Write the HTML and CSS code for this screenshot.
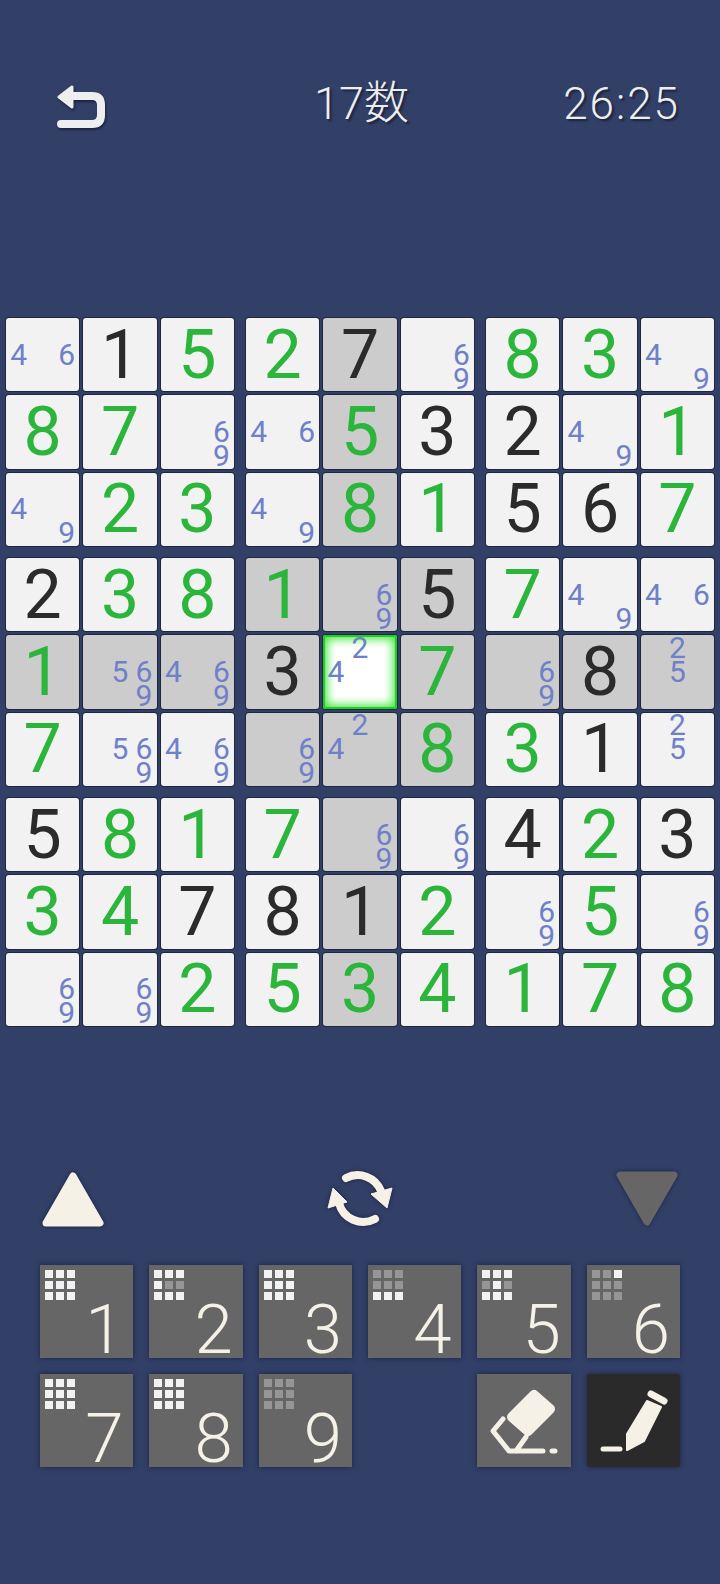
FILE: index.html
```html
<!DOCTYPE html>
<html lang="ja">
<head>
    <meta charset="UTF-8">
    <title>Sudoku</title>
    <link rel="stylesheet" href="styles.css">
</head>
<body>
    <div class="screen">
        <div class="header">
            <svg class="back-icon" viewBox="0 0 48 44">
                <path class="back-shaft" d="M14 11H35Q44 11 44 20V30Q44 39 35 39H4"/>
                <path class="back-head" d="M2 12L15 2V22Z"/>
            </svg>
            <div class="title">17数</div>
            <div class="timer">26:25</div>
        </div>

        <div class="board">
            <!-- row 1-3 -->
            <div class="block">
                <div class="cell"><span class="n4">4</span><span class="n6">6</span></div>
                <div class="cell given">1</div>
                <div class="cell solved">5</div>
                <div class="cell solved">8</div>
                <div class="cell solved">7</div>
                <div class="cell"><span class="n6">6</span><span class="n9">9</span></div>
                <div class="cell"><span class="n4">4</span><span class="n9">9</span></div>
                <div class="cell solved">2</div>
                <div class="cell solved">3</div>
            </div>
            <div class="block">
                <div class="cell solved">2</div>
                <div class="cell given shade">7</div>
                <div class="cell"><span class="n6">6</span><span class="n9">9</span></div>
                <div class="cell"><span class="n4">4</span><span class="n6">6</span></div>
                <div class="cell solved shade">5</div>
                <div class="cell given">3</div>
                <div class="cell"><span class="n4">4</span><span class="n9">9</span></div>
                <div class="cell solved shade">8</div>
                <div class="cell solved">1</div>
            </div>
            <div class="block">
                <div class="cell solved">8</div>
                <div class="cell solved">3</div>
                <div class="cell"><span class="n4">4</span><span class="n9">9</span></div>
                <div class="cell given">2</div>
                <div class="cell"><span class="n4">4</span><span class="n9">9</span></div>
                <div class="cell solved">1</div>
                <div class="cell given">5</div>
                <div class="cell given">6</div>
                <div class="cell solved">7</div>
            </div>

            <!-- row 4-6 -->
            <div class="block">
                <div class="cell given">2</div>
                <div class="cell solved">3</div>
                <div class="cell solved">8</div>
                <div class="cell solved shade">1</div>
                <div class="cell shade"><span class="n5">5</span><span class="n6">6</span><span class="n9">9</span></div>
                <div class="cell shade"><span class="n4">4</span><span class="n6">6</span><span class="n9">9</span></div>
                <div class="cell solved">7</div>
                <div class="cell"><span class="n5">5</span><span class="n6">6</span><span class="n9">9</span></div>
                <div class="cell"><span class="n4">4</span><span class="n6">6</span><span class="n9">9</span></div>
            </div>
            <div class="block">
                <div class="cell solved shade">1</div>
                <div class="cell shade"><span class="n6">6</span><span class="n9">9</span></div>
                <div class="cell given shade">5</div>
                <div class="cell given shade">3</div>
                <div class="cell selected"><span class="n2">2</span><span class="n4">4</span></div>
                <div class="cell solved shade">7</div>
                <div class="cell shade"><span class="n6">6</span><span class="n9">9</span></div>
                <div class="cell shade"><span class="n2">2</span><span class="n4">4</span></div>
                <div class="cell solved shade">8</div>
            </div>
            <div class="block">
                <div class="cell solved">7</div>
                <div class="cell"><span class="n4">4</span><span class="n9">9</span></div>
                <div class="cell"><span class="n4">4</span><span class="n6">6</span></div>
                <div class="cell shade"><span class="n6">6</span><span class="n9">9</span></div>
                <div class="cell given shade">8</div>
                <div class="cell shade"><span class="n2">2</span><span class="n5">5</span></div>
                <div class="cell solved">3</div>
                <div class="cell given">1</div>
                <div class="cell"><span class="n2">2</span><span class="n5">5</span></div>
            </div>

            <!-- row 7-9 -->
            <div class="block">
                <div class="cell given">5</div>
                <div class="cell solved">8</div>
                <div class="cell solved">1</div>
                <div class="cell solved">3</div>
                <div class="cell solved">4</div>
                <div class="cell given">7</div>
                <div class="cell"><span class="n6">6</span><span class="n9">9</span></div>
                <div class="cell"><span class="n6">6</span><span class="n9">9</span></div>
                <div class="cell solved">2</div>
            </div>
            <div class="block">
                <div class="cell solved">7</div>
                <div class="cell shade"><span class="n6">6</span><span class="n9">9</span></div>
                <div class="cell"><span class="n6">6</span><span class="n9">9</span></div>
                <div class="cell given">8</div>
                <div class="cell given shade">1</div>
                <div class="cell solved">2</div>
                <div class="cell solved">5</div>
                <div class="cell solved shade">3</div>
                <div class="cell solved">4</div>
            </div>
            <div class="block">
                <div class="cell given">4</div>
                <div class="cell solved">2</div>
                <div class="cell given">3</div>
                <div class="cell"><span class="n6">6</span><span class="n9">9</span></div>
                <div class="cell solved">5</div>
                <div class="cell"><span class="n6">6</span><span class="n9">9</span></div>
                <div class="cell solved">1</div>
                <div class="cell solved">7</div>
                <div class="cell solved">8</div>
            </div>
        </div>

        <div class="tools">
            <svg class="arrow-btn" viewBox="0 0 62 56">
                <path class="arrow-up" d="M4 52L31 5L58 52Z"/>
            </svg>
            <svg class="refresh-icon" viewBox="0 0 67 57">
                <path class="refresh-arc" d="M19 8A25 25 0 0 1 54 21"/>
                <path class="refresh-arc" d="M48 49A25 25 0 0 1 12 33"/>
                <path class="refresh-head" d="M6 18L1 38L20 32Z"/>
                <path class="refresh-head" d="M65 18L44 24L60 38Z"/>
            </svg>
            <svg class="arrow-btn" viewBox="0 0 62 56">
                <path class="arrow-down" d="M4 4H58L31 51Z"/>
            </svg>
        </div>

        <div class="keypad">
            <div class="key">
                <div class="mini"><i></i><i></i><i></i><i></i><i></i><i></i><i></i><i></i><i></i></div>
                <span class="key-num">1</span>
            </div>
            <div class="key">
                <div class="mini"><i></i><i></i><i></i><i></i><i class="off"></i><i class="off"></i><i></i><i></i><i></i></div>
                <span class="key-num">2</span>
            </div>
            <div class="key">
                <div class="mini"><i></i><i></i><i></i><i></i><i></i><i></i><i></i><i></i><i></i></div>
                <span class="key-num">3</span>
            </div>
            <div class="key">
                <div class="mini"><i class="off"></i><i class="off"></i><i class="off"></i><i class="off"></i><i class="off"></i><i class="off"></i><i></i><i></i><i></i></div>
                <span class="key-num">4</span>
            </div>
            <div class="key">
                <div class="mini"><i></i><i></i><i></i><i class="off"></i><i></i><i class="off"></i><i></i><i></i><i></i></div>
                <span class="key-num">5</span>
            </div>
            <div class="key">
                <div class="mini"><i class="off"></i><i class="off"></i><i></i><i class="off"></i><i class="off"></i><i class="off"></i><i class="off"></i><i class="off"></i><i class="off"></i></div>
                <span class="key-num">6</span>
            </div>
            <div class="key">
                <div class="mini"><i></i><i></i><i></i><i></i><i></i><i></i><i></i><i></i><i></i></div>
                <span class="key-num">7</span>
            </div>
            <div class="key">
                <div class="mini"><i></i><i></i><i></i><i></i><i></i><i></i><i></i><i></i><i></i></div>
                <span class="key-num">8</span>
            </div>
            <div class="key">
                <div class="mini"><i class="off"></i><i class="off"></i><i class="off"></i><i class="off"></i><i class="off"></i><i class="off"></i><i class="off"></i><i class="off"></i><i class="off"></i></div>
                <span class="key-num">9</span>
            </div>
            <div class="key-spacer"></div>
            <div class="key">
                <svg class="key-icon" viewBox="0 0 93 93">
                    <path class="icon-fill" d="M56 21L72 35L50 57L34 43Z"/>
                    <path class="icon-line" d="M25 45L15 57L31 77H65M48 63L38 77"/>
                    <path class="icon-line" d="M74 77H77"/>
                </svg>
            </div>
            <div class="key key-dark">
                <svg class="key-icon" viewBox="0 0 93 93">
                    <path class="icon-tip" d="M60 27L74 33L57 67L40 76V60Z"/>
                    <path class="icon-cap" d="M64 20L77 27"/>
                    <path class="icon-line" d="M16 75H33"/>
                </svg>
            </div>
        </div>
    </div>
</body>
</html>
```

FILE: styles.css
```css
body {
    margin: 0;
    background-color: #323f67;
    font-family: "Roboto", "Noto Sans CJK JP", sans-serif;
}

.screen {
    width: 720px;
    height: 1584px;
    overflow: hidden;
}

.header {
    display: grid;
    grid-template-columns: 1fr auto 1fr;
    align-items: start;
    height: 44px;
    margin-top: 85px;
    padding: 0 40px 0 57px;
    color: #eeeeee;
    text-shadow: 2px 2px 2px #1b2340;
}

.back-icon {
    width: 48px;
    height: 44px;
    filter: drop-shadow(1px 2px 1px #1b2340);
}

.back-shaft {
    fill: none;
    stroke: #eeeeee;
    stroke-width: 8;
    stroke-linecap: round;
}

.back-head {
    fill: #eeeeee;
    stroke: #eeeeee;
    stroke-width: 3;
    stroke-linejoin: round;
}

.title,
.timer {
    margin-top: -3px;
    font-weight: 300;
    line-height: 44px;
}

.title {
    margin-right: 14px;
    font-size: 45px;
}

.timer {
    justify-self: end;
    font-size: 44px;
    letter-spacing: 2px;
}

.board {
    display: grid;
    grid-template-columns: repeat(3, 228px);
    gap: 12px;
    margin-top: 189px;
    padding: 0 6px;
}

.block {
    display: grid;
    grid-template-columns: repeat(3, 1fr);
    grid-template-rows: repeat(3, 1fr);
    gap: 4px;
    height: 228px;
}

.cell {
    display: grid;
    grid-template-columns: repeat(3, 24px);
    grid-template-rows: repeat(3, 24px);
    justify-content: center;
    align-content: center;
    background-color: #f2f2f2;
    border-radius: 3px;
    box-shadow: 0 0 0 1px #1e2640;
    color: #6f80c9;
    font-size: 30px;
    line-height: 24px;
    text-align: center;
}

.shade {
    background-color: #cccccc;
}

.selected {
    background-color: #ffffff;
    box-shadow: 0 0 0 1px #1e2640, inset 0 0 0 2px #22cc22, inset 0 0 10px 4px #3be83b;
}

/* a filled-in digit takes the whole cell */
.given,
.solved {
    display: flex;
    align-items: center;
    justify-content: center;
    font-size: 68px;
    line-height: 1;
}

.given {
    color: #2b2b2b;
}

.solved {
    color: #2bb53a;
}

.n2 { grid-area: 1 / 2; }
.n4 { grid-area: 2 / 1; }
.n5 { grid-area: 2 / 2; }
.n6 { grid-area: 2 / 3; }
.n9 { grid-area: 3 / 3; }

.tools {
    display: flex;
    justify-content: space-between;
    align-items: center;
    height: 57px;
    margin-top: 144px;
    padding: 0 42px;
}

.arrow-btn {
    width: 62px;
    height: 56px;
    filter: drop-shadow(0 0 2px #1b2340);
}

.arrow-up,
.arrow-down {
    stroke-width: 7;
    stroke-linejoin: round;
}

.arrow-up {
    fill: #f6f1e7;
    stroke: #f6f1e7;
}

.arrow-down {
    fill: #666666;
    stroke: #666666;
}

.refresh-icon {
    width: 67px;
    height: 57px;
    filter: drop-shadow(0 0 2px #1b2340);
}

.refresh-arc {
    fill: none;
    stroke: #f6f1e7;
    stroke-width: 8;
    stroke-linecap: round;
}

.refresh-head {
    fill: #f6f1e7;
    stroke: #f6f1e7;
    stroke-width: 1;
    stroke-linejoin: round;
}

.keypad {
    display: grid;
    grid-template-columns: repeat(6, 1fr);
    grid-auto-rows: 93px;
    gap: 16px;
    margin-top: 38px;
    padding: 0 40px;
}

.key {
    position: relative;
    display: flex;
    align-items: flex-end;
    justify-content: flex-end;
    background-color: #666666;
    box-shadow: 0 0 5px #1b2340;
    color: #f6f1e7;
}

.key-dark {
    background-color: #2a2a2a;
    border-radius: 3px;
}

.mini {
    position: absolute;
    top: 5px;
    left: 5px;
    display: grid;
    grid-template-columns: repeat(3, 8px);
    grid-auto-rows: 8px;
    gap: 3px;
}

.mini i {
    background-color: #f2f2f2;
}

.mini i.off {
    background-color: #969696;
}

.key-num {
    width: 42px;
    margin-right: 8px;
    font-size: 69px;
    font-weight: 300;
    line-height: 56px;
    text-align: center;
}

.key-icon {
    width: 93px;
    height: 93px;
}

.icon-fill {
    fill: #f6f1e7;
    stroke: #f6f1e7;
    stroke-width: 10;
    stroke-linejoin: round;
}

.icon-tip {
    fill: #f6f1e7;
    stroke: #f6f1e7;
    stroke-width: 2;
    stroke-linejoin: round;
}

.icon-line {
    fill: none;
    stroke: #f6f1e7;
    stroke-width: 5;
    stroke-linecap: round;
    stroke-linejoin: round;
}

.icon-cap {
    fill: none;
    stroke: #f6f1e7;
    stroke-width: 7;
    stroke-linecap: round;
}
```
